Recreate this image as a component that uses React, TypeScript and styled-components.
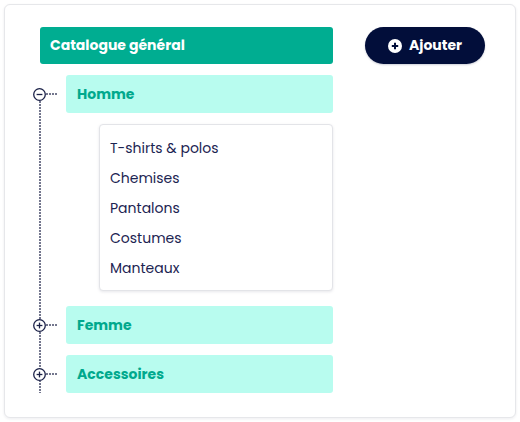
import React, { useState } from 'react';
import styled, { createGlobalStyle } from 'styled-components';

const GlobalStyle = createGlobalStyle`
  html, body {
    margin: 0;
    padding: 0;
    background: #ffffff;
  }
  * {
    box-sizing: border-box;
  }
  body {
    font-family: "Poppins", "Open Sans", "Noto Sans", sans-serif;
  }
`;

const Page = styled.div`
  padding: 4px;
`;

const Card = styled.div`
  width: 512px;
  height: 414px;
  background: #ffffff;
  border: 1px solid #e6e7ea;
  border-radius: 6px;
  box-shadow: 0 1px 3px rgba(20, 24, 60, 0.08);
  padding: 22px 0 0 28px;
  display: flex;
  align-items: flex-start;
`;

const Tree = styled.div`
  width: 300px;
  display: flex;
  flex-direction: column;
`;

const RootBar = styled.div`
  margin-left: 7px;
  height: 37px;
  background: #00ad91;
  border-radius: 3px;
  color: #ffffff;
  font-size: 14px;
  font-weight: 700;
  display: flex;
  align-items: center;
  padding-left: 10px;
`;

const Branches = styled.ul`
  list-style: none;
  margin: 11px 0 0 0;
  padding: 0;
  position: relative;
  display: flex;
  flex-direction: column;
  gap: 11px;

  &::before {
    content: '';
    position: absolute;
    left: 5.5px;
    top: 26px;
    bottom: 0;
    width: 2px;
    background: repeating-linear-gradient(to bottom, #74778e 0 2px, transparent 2px 3px);
  }
`;

const Branch = styled.li`
  display: flex;
  flex-direction: column;
`;

const BranchRow = styled.div`
  display: flex;
  align-items: center;
`;

const Toggle = styled.button`
  width: 13px;
  height: 13px;
  padding: 0;
  border: none;
  background: #ffffff;
  border-radius: 50%;
  position: relative;
  z-index: 1;
  cursor: pointer;
  display: flex;
  flex-shrink: 0;
`;

const Dash = styled.span`
  width: 11px;
  height: 2px;
  margin-right: 9px;
  background: repeating-linear-gradient(to right, #74778e 0 2px, transparent 2px 3px);
`;

const NodeBar = styled.div`
  flex: 1;
  height: 38px;
  background: #b8fcef;
  border-radius: 3px;
  color: #00a98d;
  font-size: 14px;
  font-weight: 700;
  display: flex;
  align-items: center;
  padding-left: 11px;
`;

const SubMenu = styled.ul`
  list-style: none;
  margin: 11px 0 4px 66px;
  padding: 8px 0 7px;
  background: #ffffff;
  border: 1px solid #e3e4e8;
  border-radius: 4px;
  box-shadow: 0 1px 3px rgba(20, 24, 60, 0.1);
`;

const SubItem = styled.li`
  height: 30px;
  display: flex;
  align-items: center;
  padding-left: 10px;
  font-size: 14px;
  color: #1c2452;
`;

const AddButton = styled.button`
  margin-left: 32px;
  width: 120px;
  height: 37px;
  border: none;
  border-radius: 19px;
  background: #020e3a;
  color: #ffffff;
  font-family: inherit;
  font-size: 14px;
  font-weight: 700;
  display: flex;
  align-items: center;
  justify-content: center;
  gap: 7px;
  cursor: pointer;
  box-shadow: 0 1px 2px rgba(2, 14, 58, 0.2);
`;

const ToggleIcon = ({ open }: { open: boolean }) => (
  <svg width="13" height="13" viewBox="0 0 13 13">
    <circle cx="6.5" cy="6.5" r="5.8" fill="#fff" stroke="#1b2148" strokeWidth="1.3" />
    <line x1="3.6" y1="6.5" x2="9.4" y2="6.5" stroke="#1b2148" strokeWidth="1.3" />
    {!open && <line x1="6.5" y1="3.6" x2="6.5" y2="9.4" stroke="#1b2148" strokeWidth="1.3" />}
  </svg>
);

const PlusCircle = () => (
  <svg width="14" height="14" viewBox="0 0 14 14">
    <circle cx="7" cy="7" r="7" fill="#ffffff" />
    <line x1="3.8" y1="7" x2="10.2" y2="7" stroke="#020e3a" strokeWidth="2" />
    <line x1="7" y1="3.8" x2="7" y2="10.2" stroke="#020e3a" strokeWidth="2" />
  </svg>
);

const categories = [
  { name: 'Homme', items: ['T-shirts & polos', 'Chemises', 'Pantalons', 'Costumes', 'Manteaux'] },
  { name: 'Femme', items: ['Robes', 'Jupes', 'Chemisiers'] },
  { name: 'Accessoires', items: ['Sacs', 'Ceintures', 'Bijoux'] },
];

const App: React.FC = () => {
  const [open, setOpen] = useState<string | null>('Homme');

  return (
    <Page>
      <GlobalStyle />
      <Card>
        <Tree>
          <RootBar>Catalogue général</RootBar>
          <Branches>
            {categories.map(cat => (
              <Branch key={cat.name}>
                <BranchRow>
                  <Toggle onClick={() => setOpen(open === cat.name ? null : cat.name)}>
                    <ToggleIcon open={open === cat.name} />
                  </Toggle>
                  <Dash />
                  <NodeBar>{cat.name}</NodeBar>
                </BranchRow>
                {open === cat.name && (
                  <SubMenu>
                    {cat.items.map(item => (
                      <SubItem key={item}>{item}</SubItem>
                    ))}
                  </SubMenu>
                )}
              </Branch>
            ))}
          </Branches>
        </Tree>
        <AddButton>
          <PlusCircle />
          Ajouter
        </AddButton>
      </Card>
    </Page>
  );
};

export default App;
